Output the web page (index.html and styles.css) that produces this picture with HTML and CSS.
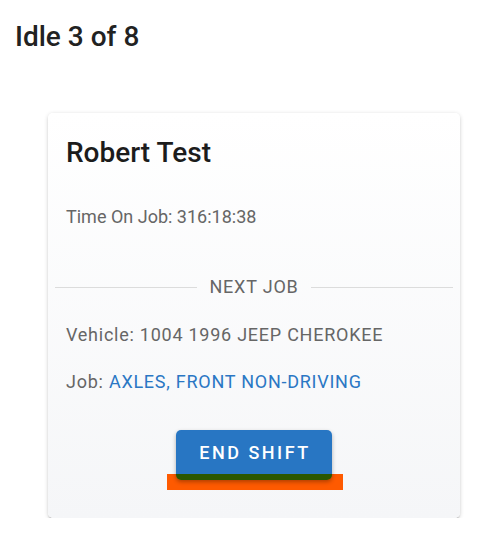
FILE: index.html
```html
<!DOCTYPE html>
<html>
<head>
<meta charset="utf-8">
<link rel="stylesheet" href="styles.css">
</head>
<body>
<h1 class="page-title">Idle 3 of 8</h1>
<div class="card">
  <h2 class="name">Robert Test</h2>
  <p class="time">Time On Job: 316:18:38</p>
  <div class="divider"><span class="divider-text">NEXT JOB</span></div>
  <p class="info">Vehicle: 1004 1996 JEEP CHEROKEE</p>
  <p class="info job">Job: <a class="job-link" href="#">AXLES, FRONT NON-DRIVING</a></p>
  <div class="actions">
    <div class="btn-wrap">
      <button class="end-btn">END SHIFT</button>
    </div>
  </div>
</div>
</body>
</html>
```
FILE: styles.css
```css
html, body {
  margin: 0;
  padding: 0;
  background: #ffffff;
}
body {
  font-family: Roboto, "Liberation Sans", sans-serif;
  color: #1f1f1f;
}
.page-title {
  margin: 0;
  padding: 21px 0 0 15px;
  font-size: 28px;
  line-height: 32px;
  font-weight: 500;
  color: #222;
}
.card {
  margin: 60px 0 0 48px;
  width: 412px;
  box-sizing: border-box;
  padding: 24px 18px 38px 18px;
  border-radius: 5px;
  background: linear-gradient(#ffffff 0%, #f5f6f8 100%);
  box-shadow: 0 2px 2px -1px rgba(0,0,0,0.25), 0 1px 4px rgba(0,0,0,0.18);
}
.name {
  margin: 0;
  font-size: 28px;
  line-height: 32px;
  font-weight: 500;
  color: #1c1c1c;
}
.time {
  margin: 36px 0 0 0;
  font-size: 18px;
  line-height: 24px;
  color: #666;
}
.divider {
  margin: 46px -11px 0 -11px;
  display: flex;
  align-items: center;
  gap: 12px;
  font-size: 18px;
  line-height: 24px;
  letter-spacing: 0.8px;
  color: #666;
}
.divider::before, .divider::after {
  content: "";
  flex: 1;
  height: 1px;
  background: #dcdcdc;
}
.info {
  margin: 24px 0 0 0;
  font-size: 18px;
  line-height: 24px;
  letter-spacing: 0.75px;
  color: #666;
}
.job {
  margin-top: 23px;
}
.job-link {
  color: #2a77c4;
  text-decoration: none;
}
.actions {
  margin-top: 36px;
  display: flex;
  justify-content: center;
}
.btn-wrap {
  position: relative;
  width: 156px;
  height: 50px;
}
.btn-wrap::before {
  content: "";
  position: absolute;
  left: -9px;
  right: -11px;
  top: 44px;
  height: 16px;
  background: #fe5a00;
}
.end-btn {
  position: relative;
  width: 156px;
  height: 50px;
  border: none;
  border-radius: 5px;
  background: linear-gradient(#2876c3 0, #2876c3 44px, #2b5700 44px);
  color: #ffffff;
  font-family: Roboto, "Liberation Sans", sans-serif;
  font-size: 18px;
  font-weight: 500;
  letter-spacing: 2.5px;
  padding: 0 0 6px 2px;
  box-shadow: 0 2px 4px rgba(0,0,0,0.3);
  cursor: pointer;
}
```
